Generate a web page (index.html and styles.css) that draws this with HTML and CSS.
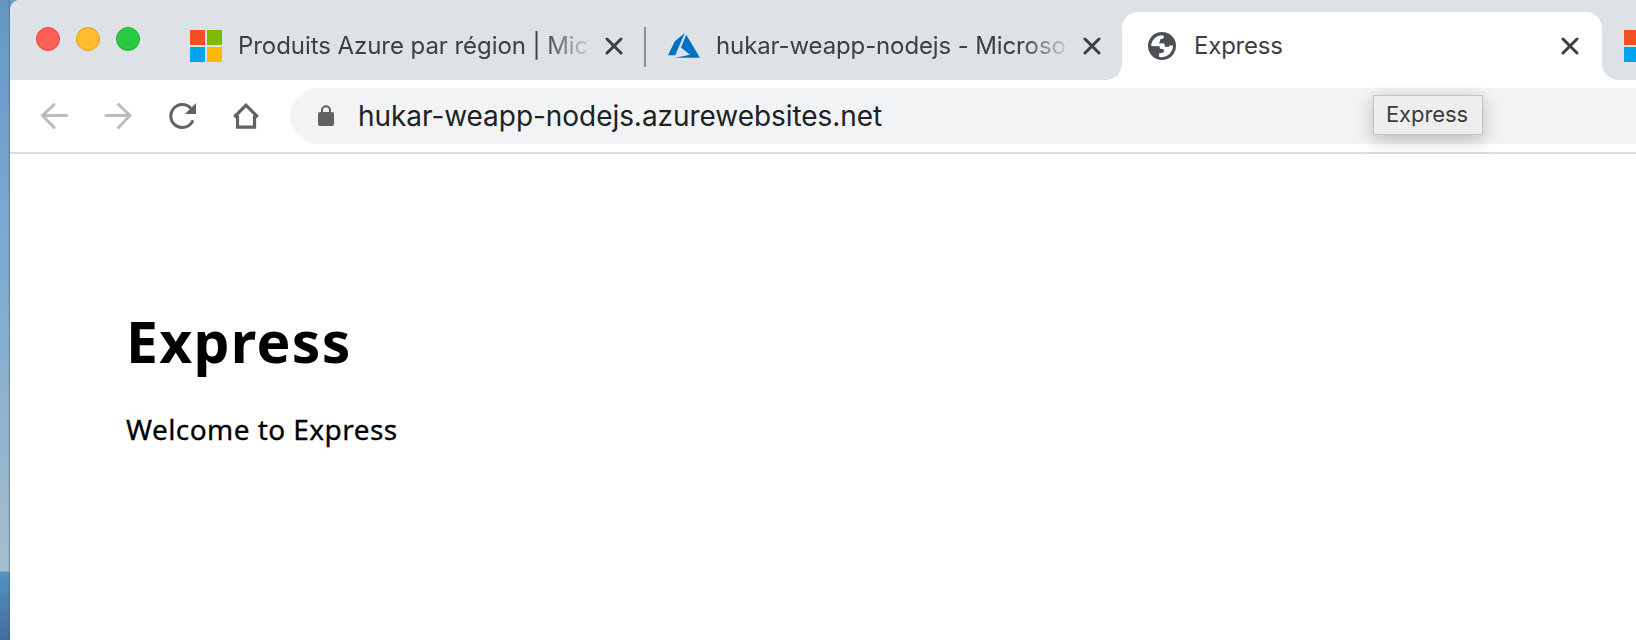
FILE: index.html
```html
<!DOCTYPE html>
<html lang="fr">
<head>
<meta charset="utf-8">
<title>Express</title>
<link rel="stylesheet" href="styles.css">
</head>
<body>
<div class="desktop">
  <div class="wallpaper"></div>
  <div class="window">
    <div class="tabstrip">
      <div class="lights"><i class="light red"></i><i class="light yellow"></i><i class="light green"></i></div>
      <div class="tab first">
        <span class="ms"><i></i><i></i><i></i><i></i></span>
        <span class="title fade t1">Produits Azure par région | Mic</span>
        <svg class="close" viewBox="0 0 18 18"><path d="M2 2 16 16M16 2 2 16"/></svg>
      </div>
      <div class="separator"></div>
      <div class="tab second">
        <svg class="azure" viewBox="0 0 32 26"><path d="M16.8 0 6.8 8.2 0 22.2H7.2ZM18.2 1.8 13 14.5 22 21.8 7.2 24.7H32Z"/></svg>
        <span class="title fade t2">hukar-weapp-nodejs - Microso</span>
        <svg class="close" viewBox="0 0 18 18"><path d="M2 2 16 16M16 2 2 16"/></svg>
      </div>
      <div class="tab active">
        <svg class="globe" viewBox="0 0 28 28"><circle cx="14" cy="14" r="14"/><path d="M3.2 14C3.4 8 8 3.2 15 3.2L16 5.2 15 6.4 12 7.4V9.4L10.5 11.2 16.3 11.4 17 14.8 20.5 14.9 21.5 13.5 25 13.4C25 20 20 25 13 25.2L11 24.8V21.6L15.6 20.6 16 18.2 15 16.9 12 16.8 11.6 14.2Z"/></svg>
        <span class="title t3">Express</span>
        <svg class="close" viewBox="0 0 18 18"><path d="M2 2 16 16M16 2 2 16"/></svg>
      </div>
      <div class="tab last"><span class="ms"><i></i><i></i><i></i><i></i></span></div>
    </div>
    <div class="toolbar">
      <svg class="nav dim" viewBox="0 0 28 28"><path d="M26.5 13.5H2.5M14 2.5 2.5 13.5 14 25.5"/></svg>
      <svg class="nav dim" viewBox="0 0 28 28"><path d="M2 13.5H26M14.5 2.5 26 13.5 14.5 25.5"/></svg>
      <svg class="nav" viewBox="0 0 28 28"><path d="M25 18.2A11.5 11.5 0 1 1 23 6.5"/><path class="solid" d="M28 1V12H17Z"/></svg>
      <svg class="nav" viewBox="0 0 28 28"><path class="house" d="M2.3 15 14 3.2 25.7 15M5.5 13.5V25.2H22.5V13.5"/></svg>
      <div class="omnibox">
        <svg class="lock" viewBox="0 0 16 22"><path class="shackle" d="M4 8V5.2a4 4 0 0 1 8 0V8"/><rect y="7" width="16" height="14" rx="2"/></svg>
        <span class="url">hukar-weapp-nodejs.azurewebsites.net</span>
      </div>
      <div class="tooltip"><span>Express</span></div>
    </div>
    <main class="page">
      <h1>Express</h1>
      <p>Welcome to Express</p>
    </main>
  </div>
</div>
</body>
</html>
```
FILE: styles.css
```css
* { box-sizing: border-box; }
body { margin: 0; overflow: hidden; font-family: Inter, "Liberation Sans", sans-serif; }
svg { display: block; flex: none; }
.desktop { display: flex; width: 1636px; height: 640px; background: #6c9dc9; }
.wallpaper {
  width: 10px; flex: none;
  background: linear-gradient(90deg, transparent 8px, #3f586e80 10px),
    linear-gradient(#6697c4, #77a9d2 220px, #8db2ce 400px, #a5bdcd 571px, #6593b5 572px, #528fbf 576px, #436d9c 640px);
}
.window { flex: 1; min-width: 0; display: flex; flex-direction: column; background: #fff; border-top-left-radius: 10px; overflow: hidden; }
.tabstrip { display: flex; height: 80px; background: #dee1e6; flex: none; }
.lights { display: flex; gap: 16px; padding: 27px 0 0 26px; width: 164px; flex: none; }
.light { width: 24px; height: 24px; border-radius: 50%; border: 1px solid; }
.red { background: #ff5f57; border-color: #e2463f; }
.yellow { background: #ffbd2e; border-color: #dfa023; }
.green { background: #28ca42; border-color: #1dad2b; }
.tab { display: flex; align-items: center; height: 68px; margin-top: 12px; flex: none; }
.first { width: 470px; padding-left: 16px; }
.second { width: 476px; padding-left: 22px; }
.separator { width: 2px; height: 40px; margin-top: 27px; background: #8d9095; flex: none; }
.ms { display: grid; grid-template-columns: 15px 15px; grid-template-rows: 15px 15px; gap: 2px; width: 32px; flex: none; }
.ms i:nth-child(1) { background: #f25022; }
.ms i:nth-child(2) { background: #7fba00; }
.ms i:nth-child(3) { background: #00a4ef; }
.ms i:nth-child(4) { background: #ffb900; }
.title { font-size: 24px; line-height: 32px; letter-spacing: -0.12px; color: #3c4043; white-space: nowrap; flex: none; }
.t1 { letter-spacing: -0.06px; }
.t3 { letter-spacing: -0.2px; }
.fade { width: 350px; margin: 0 17px 0 16px; -webkit-mask-image: linear-gradient(90deg, #000 305px, transparent 356px); mask-image: linear-gradient(90deg, #000 305px, transparent 356px); }
.close { width: 18px; height: 18px; fill: none; stroke: #3c4043; stroke-width: 3; stroke-linecap: round; }
.azure { width: 32px; height: 26px; fill: #0072c6; }
.active { position: relative; width: 480px; padding: 0 23px 0 26px; background: #fff; border-radius: 16px 16px 0 0; }
.active::before, .active::after { content: ""; position: absolute; bottom: 0; width: 16px; height: 16px; }
.active::before { left: -16px; background: radial-gradient(circle at 0 0, transparent 15.5px, #fff 16px); }
.active::after { right: -16px; background: radial-gradient(circle at 100% 0, transparent 15.5px, #fff 16px); }
.active .title { margin-left: 18px; }
.active .close { margin-left: auto; }
.globe { width: 28px; height: 28px; fill: #4d5156; }
.globe path { fill: #fff; }
.last { padding-left: 22px; }
.toolbar { position: relative; display: flex; align-items: center; height: 74px; padding: 0 0 0 30px; border-bottom: 2px solid #dadce0; flex: none; }
.nav { width: 28px; height: 28px; margin-right: 36px; fill: none; stroke: #5f6368; stroke-width: 3; }
.dim { stroke: #babcbe; stroke-linecap: round; }
.nav .solid { fill: #5f6368; stroke: none; }
.nav .house { stroke-width: 3.2; }
.omnibox { display: flex; align-items: center; flex: 1; height: 56px; margin-left: -6px; padding-left: 28px; background: #f1f3f4; border-radius: 28px 0 0 28px; }
.lock { width: 16px; height: 22px; fill: #5f6163; }
.lock .shackle { fill: none; stroke: #5f6163; stroke-width: 2; }
.url { margin-left: 24px; font-size: 28px; line-height: 36px; letter-spacing: -0.05px; color: #202124; white-space: nowrap; }
.tooltip { position: absolute; left: 1363px; top: 15px; width: 110px; height: 40px; padding-left: 12px; background: #eee; border: 1px solid #c3c4c5; font-size: 22px; line-height: 37px; letter-spacing: -0.1px; color: #3c3c3c; box-shadow: 0 5px 18px #0000003d; }
.page { padding: 149px 0 0 116px; font-family: "Noto Sans", "Open Sans", sans-serif; color: #000; }
h1 { margin: 0; font-size: 57px; line-height: 76px; font-weight: 700; letter-spacing: 1.3px; }
p { margin: 31px 0 0; font-size: 28px; line-height: 38px; letter-spacing: 0.44px; -webkit-text-stroke: 0.3px #000; }
```
